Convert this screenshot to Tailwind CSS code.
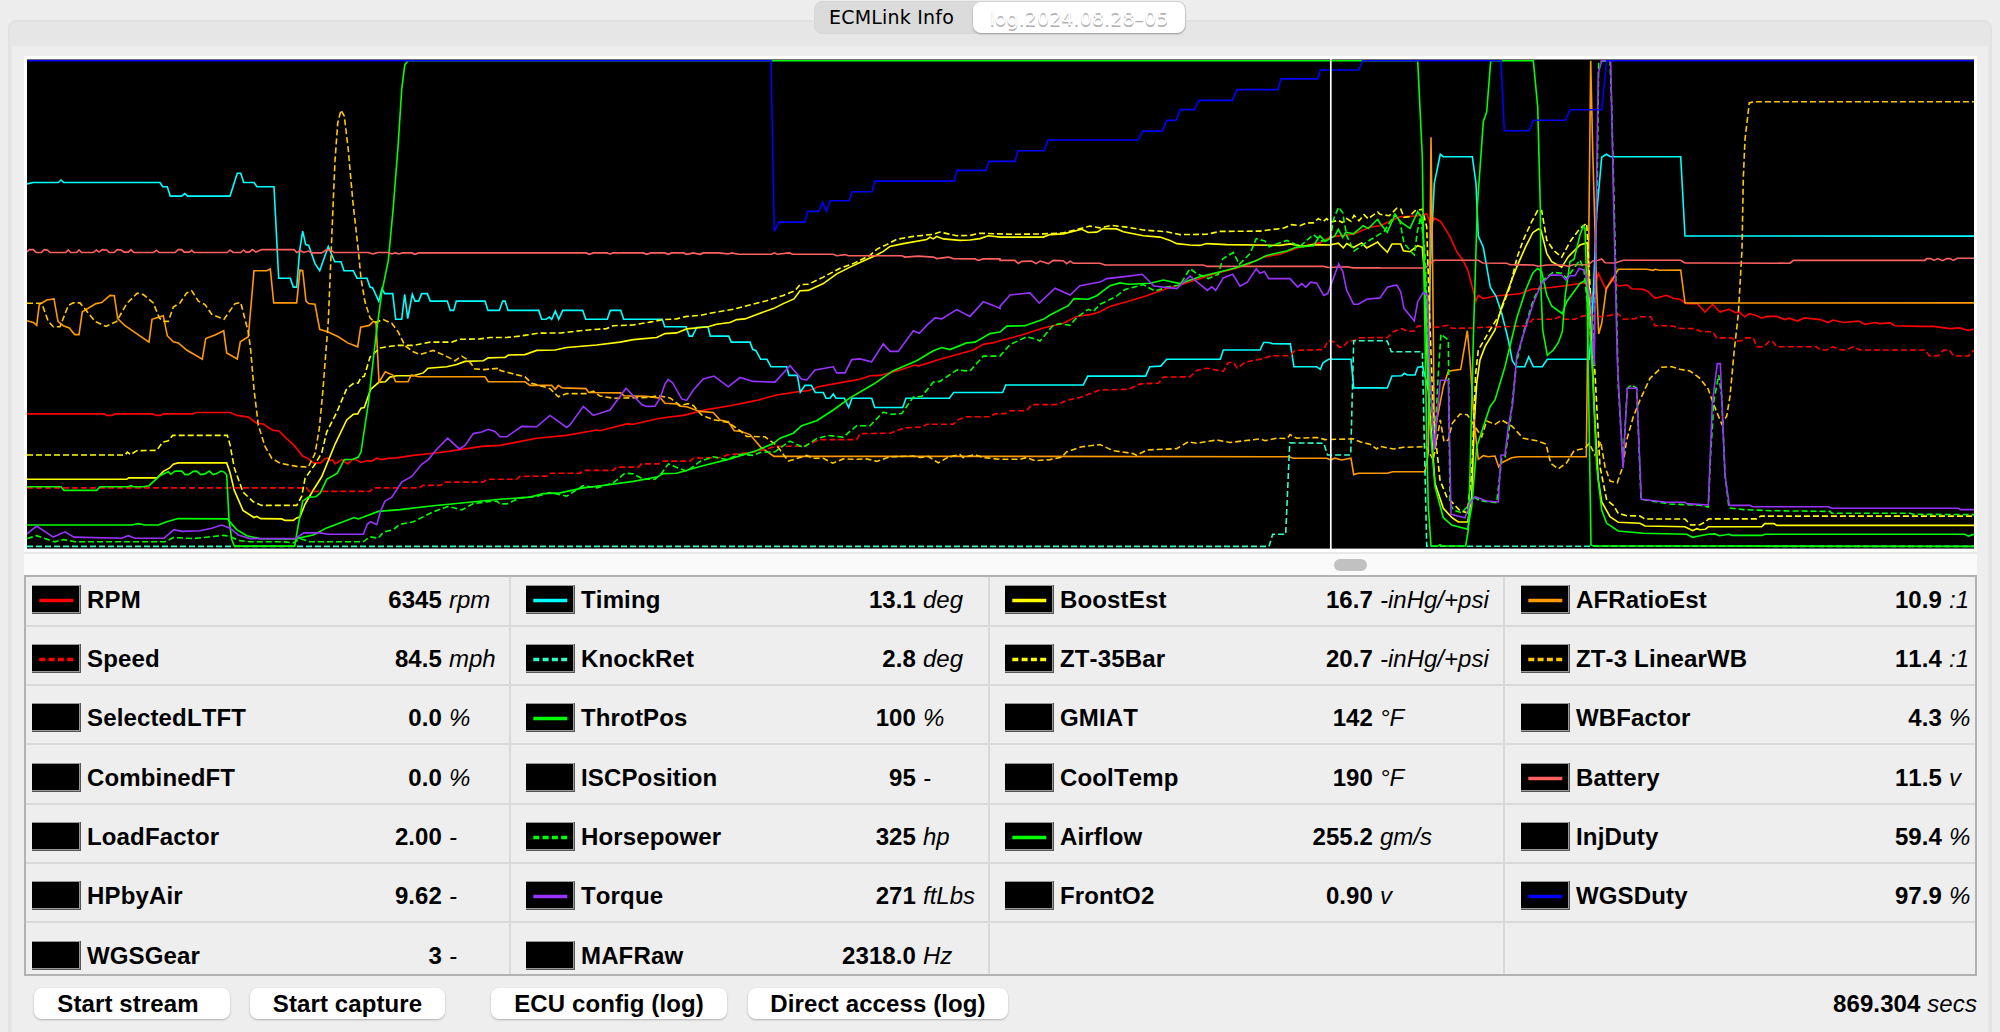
<!DOCTYPE html>
<html lang="en">
<head>
  <meta charset="UTF-8" />
  <meta name="viewport" content="width=device-width, initial-scale=1.0"/>
  <title>ECMLink</title>
  <script src="https://cdn.jsdelivr.net/npm/@tailwindcss/browser@4"></script>
</head>
<body class="bg-[#ededed] w-[2000px] h-[1032px] overflow-hidden text-black text-2xl font-['Liberation_Sans',Arial,sans-serif] [font-kerning:none]">

<div class="relative h-full pt-5 px-2">

  <!-- tabs sit on the top edge of the panel -->
  <div class="absolute top-px left-[814px] w-[372px] h-[33px] flex rounded-lg bg-[#dbdbdb] border border-[#d6d6d6] text-[19px] font-['DejaVu_Sans',sans-serif]">
    <button class="w-[158px] pl-[14px] text-left leading-[31px] tracking-[0.2px] whitespace-nowrap">ECMLink Info</button>
    <button class="flex-1 rounded-lg bg-white shadow-[0_1px_2px_#9a9a9a] text-white leading-[32px] tracking-[0.1px] [text-shadow:0_1.5px_0_#b4b4b4] whitespace-nowrap">log.2024.08.28–05</button>
  </div>

  <main class="h-[1040px] rounded-t-lg border-2 border-[#e1e1e1] bg-[#e6e6e6] pt-6 px-0.5">
    <div class="h-full bg-[#eeeeee] pt-2.5 pl-3 pr-[11px] flex flex-col">

      <div class="bg-white p-[3px] h-[496px]">
        <svg id="chart" class="block w-[1947px] h-[490px] bg-black" viewBox="27 59 1947 490" fill="none"></svg>
      </div>

      <div class="h-[23px] bg-[#fafafa] border-t-2 border-[#e8e8e8] flex items-center">
        <div class="ml-[1310px] w-[33px] h-3 rounded-full bg-[#c1c1c1]"></div>
      </div>

      <div id="values" class="h-[401px] border-2 border-[#b2b2b2] flex"></div>

      <footer class="flex items-start pt-3 pl-2.5 font-bold whitespace-nowrap">
        <button class="w-[196px] h-[31px] pr-2 rounded-lg bg-white shadow-[0_1px_2px_#b0b0b0] leading-7 tracking-[0.1px]">Start stream</button>
        <button class="w-[195px] h-[31px] ml-5 rounded-lg bg-white shadow-[0_1px_2px_#b0b0b0] leading-7 tracking-[0.1px]">Start capture</button>
        <button class="w-[236px] h-[31px] ml-[46px] rounded-lg bg-white shadow-[0_1px_2px_#b0b0b0] leading-7 tracking-[0.1px]">ECU config (log)</button>
        <button class="w-[260px] h-[31px] ml-[21px] rounded-lg bg-white shadow-[0_1px_2px_#b0b0b0] leading-7 tracking-[0.1px]">Direct access (log)</button>
        <div class="ml-auto leading-8 tracking-[0.1px]">869.304 <span class="font-normal italic">secs</span></div>
      </footer>
    </div>
  </main>
</div>

<script>
  // name, value, unit, line colour, dashed
  const columns = [
    { box: 'w-[485px] border-r-2 border-[#d9d9d9]', pad: 'pl-1.5', unit: 'w-[60px]', rows: [
      ['RPM', '6345', 'rpm', '#ff0000'],
      ['Speed', '84.5', 'mph', '#ff0000', 1],
      ['SelectedLTFT', '0.0', '%'],
      ['CombinedFT', '0.0', '%'],
      ['LoadFactor', '2.00', '-'],
      ['HPbyAir', '9.62', '-'],
      ['WGSGear', '3', '-'],
    ]},
    { box: 'w-[479px] border-r-2 border-[#d9d9d9]', pad: 'pl-[15px]', unit: 'w-[65px]', rows: [
      ['Timing', '13.1', 'deg', '#00ffff'],
      ['KnockRet', '2.8', 'deg', '#32ffc8', 1],
      ['ThrotPos', '100', '%', '#00ff00'],
      ['ISCPosition', '95', '-'],
      ['Horsepower', '325', 'hp', '#00ff00', 1],
      ['Torque', '271', 'ftLbs', '#9933ff'],
      ['MAFRaw', '2318.0', 'Hz'],
    ]},
    { box: 'w-[515px] border-r-2 border-[#d9d9d9]', pad: 'pl-[15px]', unit: 'w-[123px]', rows: [
      ['BoostEst', '16.7', '-inHg/+psi', '#ffff00'],
      ['ZT-35Bar', '20.7', '-inHg/+psi', '#ffff00', 1],
      ['GMIAT', '142', '°F'],
      ['CoolTemp', '190', '°F'],
      ['Airflow', '255.2', 'gm/s', '#00ff00'],
      ['FrontO2', '0.90', 'v'],
      null,
    ]},
    { box: 'w-[470px]', pad: 'pl-4', unit: 'w-[26px]', rows: [
      ['AFRatioEst', '10.9', ':1', '#ff9900'],
      ['ZT-3 LinearWB', '11.4', ':1', '#ffc800', 1],
      ['WBFactor', '4.3', '%'],
      ['Battery', '11.5', 'v', '#ff6060'],
      ['InjDuty', '59.4', '%'],
      ['WGSDuty', '97.9', '%', '#0000ff'],
      null,
    ]},
  ];

  document.getElementById('values').innerHTML = columns.map(c => `
    <div class="${c.box} overflow-hidden">
      ${c.rows.map(r => `
        <div class="${c.pad} flex items-start h-[59.35px] pt-[17.6px] first:h-[49.5px] first:pt-[7.6px] border-b-2 last:border-b-0 border-[#d9d9d9] leading-[29px] whitespace-nowrap">
          ${r ? `
          <svg class="shrink-0 w-[49px] h-[29px]" viewBox="0 0 49 29">
            <rect width="49" height="29" fill="#555"/>
            <rect width="48" height="28" fill="#999"/>
            <rect y="1" width="47" height="26" fill="#000"/>
            ${r[3] ? `<path d="M7.3 15.5H41.3" stroke="${r[3]}" stroke-width="3.4" ${r[4] ? 'stroke-dasharray="6 3.3"' : ''}/>` : ''}
          </svg>
          <span class="ml-1.5 font-bold tracking-[0.15px]">${r[0]}</span>
          <span class="ml-auto font-bold tracking-[0.1px]">${r[1]}</span>
          <span class="${c.unit} ml-[7px] italic">${r[2]}</span>` : ''}
        </div>`).join('')}
    </div>`).join('');

  // sample points are kept in blocks, each with its own origin and scale
  const blocks = {
    A: [0, 0, 2.8],
    B: [500, 0, 2.8],
    C: [1000, 0, 2.8],
    D: [1380, 40, 3],
    E: [1660, 0, 2.8],
  };

  const series = [
    { name: 'RPM', color: '#ff0000',
      A: '81,1159 312,1159 320,1163 336,1163 344,1159 458,1159 468,1163 482,1163 490,1159 578,1159 588,1155 690,1155 712,1163 745,1168 770,1185 790,1187 805,1197 820,1205 836,1206 860,1228 885,1250 908,1277 925,1284 940,1296 962,1296 975,1284 983,1282 990,1290 998,1288 1006,1299 1025,1287 1043,1299 1060,1284 1083,1295 1100,1290 1115,1291 1130,1283 1145,1287 1165,1283 1190,1282 1240,1275 1300,1269 1350,1263 1400,1256 1445,1250 1500,1247',
      B: '50,1238 110,1227 200,1219 290,1204 300,1206 380,1187 400,1188 480,1171 550,1163 620,1147 690,1136 770,1121 830,1106 900,1096 925,1094 955,1083 1030,1070 1080,1062 1110,1052 1140,1051 1200,1036 1245,1022 1255,1025 1320,1006 1420,980 1450,964 1478,960 1500,954',
      C: '70,937 130,918 190,905 230,886 270,881 300,873 330,858 380,845 440,828 500,808 540,798 580,786 640,768 700,753 740,742 790,720 840,712 900,692 960,680 990,664 1060,656 1110,636 1140,632',
      D: '20,548 60,530 110,528 140,521 153,556 163,534 182,545 210,590 230,635 250,662 265,695 288,783 295,766 310,776 345,768 420,761 455,748 520,742 550,738 615,728 635,770 645,740 655,700 679,750 695,715 715,738 742,735 755,746 790,748 805,755 825,775 860,766 880,775 900,778 915,788',
      E: '80,850 112,850 135,874 158,852 180,874 208,866 225,875 238,874 254,887 268,878 290,884 305,891 320,886 350,886 374,895 388,891 412,899 433,890 480,895 505,903 518,896 550,903 595,899 615,908 645,903 660,906 690,904 705,912 780,914 820,914 870,920 900,918 925,925 942,922' },
    { name: 'Timing', color: '#00ffff',
      A: '81,515 100,511 175,511 183,504 191,511 480,511 488,523 502,523 511,549 545,549 554,542 563,549 690,549 712,485 722,485 731,511 762,511 771,523 822,523 836,779 871,779 880,804 890,804 899,700 908,647 917,685 926,687 945,738 959,758 985,690 1004,733 1023,733 1032,758 1060,758 1071,779 1101,779 1110,804 1118,806 1136,843 1146,808 1154,822 1178,822 1187,894 1205,894 1214,824 1223,892 1237,824 1245,843 1256,843 1265,822 1282,822 1291,843 1342,843 1351,869 1361,869 1369,843 1455,843 1464,869 1498,869',
      B: '8,843 15,843 24,869 116,869 125,894 138,894 148,888 155,894 166,871 176,894 188,869 248,869 257,894 322,894 331,869 362,869 371,894 487,894 494,915 558,915 568,941 577,941 590,917 624,915 631,941 686,941 694,958 750,958 758,978 768,982 782,1006 801,1006 813,1027 860,1027 867,1051 892,1051 901,1098 915,1079 934,1079 946,1099 970,1099 978,1115 990,1115 1000,1103 1008,1115 1033,1115 1046,1141 1056,1115 1115,1115 1124,1141 1208,1141 1218,1115 1348,1115 1361,1099 1500,1099',
      C: '8,1099 17,1078 250,1078 263,1053 437,1053 449,1027 482,1025 500,1006 661,1006 670,980 780,980 791,959 806,959 817,962 871,963 882,1027 950,1027 961,1034 969,1016 986,1006 1053,1006 1061,1086 1140,1086',
      D: '22,1044 36,1008 65,1007 73,1000 82,1005 105,1005 113,982 128,980 145,1050 150,700 163,430 181,343 190,350 277,350 288,430 295,588 310,622 331,742 348,768 365,820 385,900 397,962 409,980 434,980 446,950 460,980 487,980 502,958 628,958 638,800 650,520 665,352 679,343 692,350 902,350 915,588 960,588',
      E: '942,661' },
    { name: 'BoostEst', color: '#ffff00',
      A: '81,1342 380,1342 386,1338 472,1338 490,1320 508,1311 520,1300 535,1296 680,1296 690,1323 703,1373 729,1429 762,1449 770,1446 782,1452 845,1453 855,1457 880,1457 890,1450 900,1447 915,1412 940,1372 965,1335 1005,1244 1040,1176 1060,1160 1073,1159 1083,1143 1093,1141 1112,1090 1137,1070 1156,1069 1170,1056 1190,1052 1240,1052 1270,1044 1284,1031 1340,1027 1370,1021 1395,1012 1450,1010 1465,1002 1500,1001',
      B: '15,1001 25,994 75,993 110,981 165,980 200,973 290,966 360,958 400,951 470,945 495,934 530,932 560,921 625,915 650,908 690,903 710,895 735,893 780,877 820,864 850,850 882,837 900,814 925,813 970,794 1010,767 1050,748 1090,731 1130,714 1150,704 1170,690 1210,682 1280,671 1290,664 1300,669 1310,662 1330,669 1380,673 1410,672 1440,668 1465,660 1500,664',
      C: '50,664 130,664 150,657 190,655 245,642 265,651 290,650 310,640 350,641 370,649 430,660 480,664 510,673 530,682 570,686 600,687 620,682 680,685 840,687 870,683 910,690 940,685 990,686 1015,681 1030,694 1040,682 1060,693 1085,680 1100,694 1133,678 1140,686',
      D: '22,637 36,612 62,612 70,632 90,635 113,617 127,622 133,700 145,1050 165,1330 190,1405 215,1432 235,1446 263,1446 275,1370 283,1150 290,1030 300,960 315,920 345,870 365,800 395,720 415,670 437,620 458,578 475,567 483,570 500,640 515,665 545,682 565,650 600,615 622,608 630,800 645,1150 655,1320 665,1385 690,1430 715,1447 780,1450 795,1458 915,1460 938,1472 950,1466 960,1469',
      E: '136,1482 145,1475 305,1475 314,1466 342,1466 350,1471 942,1471' },
    { name: 'AFRatioEst', color: '#ff9900',
      A: '81,898 100,903 110,911 118,853 140,840 162,837 174,900 190,912 208,918 224,937 237,937 247,873 288,850 305,847 330,827 343,828 353,892 375,912 447,958 456,894 490,884 502,940 520,957 535,960 560,980 607,1006 617,948 645,938 671,926 680,988 712,1005 721,957 745,943 762,758 800,758 811,753 821,848 890,848 900,756 908,758 918,843 926,850 945,852 959,922 985,930 1015,943 1043,960 1073,971 1082,916 1108,911 1120,900 1128,902 1137,1070 1156,1041 1178,1050 1187,1069 1224,1069 1234,1050 1255,1055 1455,1055 1465,1069 1500,1069',
      B: '75,1069 90,1079 155,1079 166,1090 175,1079 187,1086 258,1088 266,1099 362,1100 372,1108 440,1110 482,1115 495,1129 530,1131 540,1137 560,1139 600,1152 640,1155 660,1176 685,1181 703,1206 720,1207 750,1217 782,1252 822,1278 1500,1278',
      C: '868,1279 880,1283 980,1283 992,1288 1005,1283 1025,1288 1053,1283 1061,1329 1075,1325 1140,1325',
      D: '22,1300 38,1295 135,1295 145,1240 153,292 158,700 163,1180 190,1040 205,994 242,988 262,872 270,960 283,1150 295,1258 310,1247 325,1250 345,1248 356,1280 365,1268 395,1253 415,1250 619,1250 622,1000 632,62 638,330 650,750 656,882 665,850 679,745 695,722 715,688 800,688 820,691 825,688 840,691 902,690 915,789 960,789',
      E: '942,848' },
    { name: 'Speed', color: '#ff0000', dashed: true,
      A: '81,1366 920,1366 928,1376 1110,1376 1120,1366 1258,1366 1268,1359 1322,1359 1335,1350 1450,1350 1460,1342 1500,1342',
      B: '50,1342 60,1334 140,1333 150,1325 240,1325 250,1317 340,1317 350,1308 415,1308 425,1299 475,1299 490,1291 570,1291 580,1283 665,1281 680,1274 760,1266 830,1250 915,1249 935,1240 960,1231 1070,1231 1080,1214 1170,1213 1215,1198 1270,1195 1280,1188 1360,1188 1375,1175 1400,1167 1470,1167 1485,1159 1500,1158',
      C: '15,1158 30,1150 80,1150 95,1133 170,1133 200,1121 240,1113 300,1092 385,1090 420,1075 475,1073 490,1056 570,1055 590,1037 620,1031 670,1040 685,1015 700,1015 712,1031 735,1014 790,1004 815,996 870,996 885,981 970,979 985,954 1002,957 1018,972 1030,972 1043,956 1065,953 1075,946 1140,945',
      D: '22,893 40,875 65,866 85,875 105,872 113,858 170,862 205,856 215,865 277,864 310,862 440,858 458,838 520,838 540,830 555,838 585,838 600,830 625,825 665,830 715,822 730,838 765,836 775,830 812,830 825,857 880,858 895,865 945,866 960,874',
      E: '158,929 170,946 215,946 230,955 245,954 255,946 280,946 290,971 312,971 328,955 340,958 350,971 470,971 482,980 500,980 518,971 545,980 560,979 580,971 600,980 795,980 808,996 835,996 850,981 868,980 880,996 925,997 942,980' },
    { name: 'KnockRet', color: '#32ffc8', dashed: true,
      A: '81,1530',
      C: '807,1530 818,1496 857,1496 869,1240 971,1241 983,1274 1052,1274 1061,954 1140,954',
      D: '22,903 34,935 127,935 140,1519 960,1519',
      E: '942,1530' },
    { name: 'ZT-35Bar', color: '#ffff00', dashed: true,
      A: '81,1274 375,1274 382,1266 392,1273 410,1262 470,1261 488,1238 505,1234 518,1219 682,1219 690,1245 703,1310 729,1378 760,1405 785,1415 890,1415 905,1390 915,1340 945,1300 965,1268 980,1210 1010,1155 1040,1088 1060,1074 1075,1072 1083,1056 1093,1054 1110,1000 1140,974 1190,967 1240,967 1290,958 1355,958 1380,950 1440,949 1470,945 1500,945',
      B: '20,945 60,941 115,933 185,932 240,926 320,920 340,912 400,910 450,902 490,895 530,893 560,886 600,883 630,877 700,866 740,856 800,842 850,827 885,814 900,797 925,796 970,776 1020,751 1060,738 1110,715 1130,698 1160,685 1190,670 1240,662 1300,656 1320,650 1370,660 1410,659 1440,653 1500,655',
      C: '40,656 130,655 190,652 225,644 270,633 300,638 335,631 380,636 430,644 500,649 540,657 620,656 660,648 780,647 850,639 875,629 900,632 920,624 940,624 955,612 970,620 980,612 990,622 1015,617 1027,623 1040,612 1053,620 1062,603 1077,618 1092,601 1105,613 1115,605 1133,594 1140,600',
      D: '28,527 50,505 62,507 72,532 88,530 105,512 127,508 140,560 148,800 160,1130 180,1320 200,1370 240,1412 262,1418 275,1300 287,1000 295,930 330,870 358,825 390,740 412,650 430,600 455,545 475,508 485,512 500,600 520,630 545,652 570,605 600,565 620,550 628,700 645,1000 660,1280 680,1380 700,1396 715,1420 740,1427 780,1428 795,1437 915,1437 932,1455 960,1454',
      E: '136,1461 146,1453 290,1453 302,1445 942,1445' },
    { name: 'ZT-3 LinearWB', color: '#ffc800', dashed: true,
      A: '81,849 125,849 145,900 160,915 180,915 205,855 220,848 240,848 255,865 285,900 318,914 350,900 380,850 412,821 430,825 460,848 478,890 490,900 505,900 520,860 540,848 560,820 575,814 595,843 615,853 635,880 672,894 705,850 722,847 745,930 752,980 762,1090 775,1190 795,1250 815,1283 840,1297 890,1306 925,1308 945,1270 958,1200 968,1100 985,900 998,600 1005,450 1013,345 1023,308 1033,325 1045,420 1058,560 1075,700 1083,780 1095,845 1110,890 1125,903 1150,895 1175,905 1195,930 1215,968 1240,985 1260,993 1300,981 1340,998 1365,1010 1385,997 1405,1008 1425,1033 1450,1035 1500,1031',
      B: '0,1037 40,1047 75,1055 95,1073 150,1088 175,1111 200,1102 260,1102 280,1095 300,1109 340,1115 440,1113 475,1108 510,1114 540,1135 565,1130 580,1135 605,1162 640,1175 685,1183 720,1206 740,1222 795,1223 830,1247 865,1291 920,1275 940,1283 970,1283 998,1297 1030,1285 1070,1286 1100,1285 1130,1292 1170,1279 1240,1277 1260,1281 1285,1278 1315,1296 1345,1280 1380,1273 1390,1281 1425,1273 1450,1281 1500,1286',
      C: '60,1286 80,1281 105,1290 150,1287 185,1280 200,1265 245,1251 300,1245 340,1262 400,1270 410,1275 440,1260 530,1256 565,1237 590,1241 650,1232 690,1239 780,1229 795,1234 830,1227 862,1228 870,1217 890,1227 950,1225 975,1231 1060,1229 1080,1237 1110,1244 1130,1257 1140,1250',
      D: '40,1227 70,1222 138,1220 160,1260 170,1200 181,1140 192,1205 205,1200 217,1150 240,1122 262,1124 285,1160 305,1190 320,1143 345,1153 365,1140 395,1158 430,1195 470,1202 498,1212 512,1270 535,1287 560,1268 582,1232 615,1225 628,1210 645,1245 662,1205 675,1280 690,1323 712,1328 728,1280 740,1200 760,1130 780,1080 810,1015 845,982 875,980 900,988 930,993 960,1015',
      E: '145,1090 160,1130 185,1187 200,1165 210,1110 223,980 235,880 246,700 250,500 255,390 268,288 280,285 942,285' },
    { name: 'ThrotPos', color: '#00ff00',
      A: '81,1363 183,1363 192,1373 290,1373 300,1363 385,1363 393,1360 400,1363 430,1363 447,1360 480,1332 495,1325 505,1321 512,1328 525,1319 545,1319 555,1329 565,1329 580,1320 590,1319 602,1329 615,1327 628,1319 640,1329 650,1326 663,1319 673,1322 680,1330 687,1455 695,1510 703,1529 884,1529 895,1470 908,1403 925,1392 947,1391 961,1380 980,1342 1012,1325 1033,1287 1060,1286 1075,1280 1083,1266 1105,1130 1128,940 1145,820 1165,730 1180,580 1195,400 1205,250 1214,183 1223,170',
      D: '113,62 127,350 132,700 140,1200 145,1400 153,1518 175,1518 180,1514 185,1518 257,1518 265,1470 270,1300 280,900 292,500 310,245 320,215 332,62 460,62 473,200 481,500 483,750 488,870 502,946 520,930 535,908 547,875 556,765 570,665 582,658 600,585 610,558 615,565 622,800 633,1515 640,1518 960,1518',
      E: '942,1530' },
    { name: 'Battery', color: '#ff6060',
      A: '81,705 88,699 100,699 108,707 124,707 133,699 142,700 150,707 197,707 205,700 212,707 230,707 237,700 245,707 280,707 289,700 297,706 307,699 320,700 328,707 342,707 352,699 364,700 372,706 385,706 393,699 401,707 460,707 470,701 478,707 525,707 535,699 545,699 552,706 568,706 575,701 582,707 682,707 690,700 700,707 722,707 731,700 738,706 748,706 757,699 768,706 785,699 882,699 890,707 900,702 912,707 925,703 935,708 965,708 980,699 993,700 1002,707 1105,707 1118,711 1135,707 1165,707 1175,711 1187,708 1197,711 1207,708 1235,708 1245,712 1256,708 1500,708',
      B: '258,708 268,712 280,708 320,708 330,711 340,708 430,708 440,712 452,708 495,708 505,712 515,708 550,708 560,712 580,708 600,712 610,708 655,708 685,711 695,708 715,712 815,712 823,708 832,712 868,708 878,712 1000,712 1010,716 1035,713 1045,716 1205,716 1215,720 1255,717 1300,720 1310,724 1345,720 1360,724 1425,725 1435,729 1450,725 1500,725',
      C: '0,729 45,729 55,738 65,732 95,731 108,738 120,731 145,738 160,729 190,730 200,738 210,731 220,737 300,737 315,742 610,742 622,746 970,746 985,749 1040,747 1060,750 1140,750',
      D: '0,684 135,684 150,672 163,661 295,661 308,669 380,670 390,674 460,675 475,679 500,675 550,675 565,679 580,674 625,674 640,662 655,661 665,657 675,668 705,669 730,661 902,661 915,669 960,669',
      E: '390,737 400,729 795,729 800,724 812,724 822,729 833,724 848,730 860,724 870,724 880,729 892,723 942,723' },
    { name: 'Horsepower', color: '#00ff00', dashed: true,
      A: '81,1508 110,1500 150,1513 165,1517 190,1511 225,1517 495,1517 520,1505 580,1508 670,1499 690,1502 715,1513 750,1517 850,1517 880,1520 900,1508 930,1517 1090,1517 1110,1503 1135,1507 1150,1490 1180,1483 1200,1468 1240,1461 1300,1433 1345,1418 1385,1428 1420,1410 1460,1405 1490,1403',
      B: '0,1411 20,1411 60,1394 110,1390 150,1379 200,1389 250,1360 290,1366 340,1352 375,1325 400,1327 430,1342 465,1342 485,1325 505,1299 540,1312 560,1320 600,1292 640,1279 680,1287 720,1272 760,1275 780,1267 825,1265 870,1235 910,1253 950,1228 985,1219 1030,1224 1070,1192 1110,1192 1150,1154 1175,1160 1205,1158 1240,1112 1265,1110 1300,1070 1320,1068 1370,1036 1410,1039 1450,997 1500,997',
      C: '30,965 80,943 110,950 120,955 160,910 180,906 210,911 230,889 265,866 280,872 300,852 345,832 375,811 430,797 465,815 500,804 540,798 570,752 590,766 625,780 655,768 668,725 700,707 718,740 750,710 769,668 795,675 808,691 860,673 900,690 940,657 965,675 990,670 1002,610 1016,580 1028,596 1040,660 1062,703 1100,678 1140,655',
      D: '12,575 45,522 60,545 72,610 103,645 112,575 122,530 135,640 148,1000 163,1230 175,1000 183,882 205,900 210,1390 220,1410 245,1418 262,1400 280,1370 300,1382 350,1388 365,1256 375,1252 390,1150 410,965 430,880 460,780 490,720 520,697 545,700 560,715 600,660 612,690 640,980 652,400 656,65 690,62 695,200 705,600 715,1040 729,1270 742,1045 755,1035 770,1045 783,1378 870,1392 960,1396',
      E: '145,1420 152,1270 162,1120 176,1050 185,1110 195,1330 207,1422 250,1427 330,1430 510,1432 515,1437 750,1437 760,1440 942,1441' },
    { name: 'Airflow', color: '#00ff00',
      A: '81,1470 395,1470 415,1466 435,1470 475,1470 500,1461 535,1452 682,1453 710,1483 740,1500 780,1508 885,1509 940,1498 980,1478 1020,1464 1062,1449 1075,1453 1135,1432 1200,1427 1300,1416 1400,1407 1500,1398',
      B: '90,1392 130,1382 180,1380 250,1366 320,1358 400,1348 470,1336 490,1326 530,1325 600,1306 690,1285 770,1261 820,1242 840,1227 880,1213 905,1192 950,1178 1000,1148 1050,1114 1120,1076 1180,1038 1250,1010 1300,982 1325,973 1350,979 1400,960 1425,958 1470,934 1500,930',
      C: '20,913 75,912 130,894 150,882 205,856 222,836 265,838 290,828 330,800 360,792 385,796 450,793 490,784 540,794 600,775 700,752 770,729 800,715 860,703 890,692 940,688 960,660 975,676 1005,660 1015,642 1028,665 1038,650 1060,655 1090,632 1105,640 1133,614 1140,625',
      D: '22,577 45,525 65,548 90,565 113,515 127,535 135,700 148,1130 165,1340 190,1433 215,1455 263,1468 275,1400 290,1220 330,1100 345,1080 375,980 410,835 437,750 458,700 473,685 485,695 500,765 515,798 547,821 560,785 600,730 622,718 635,950 650,1280 665,1410 680,1450 715,1473 790,1480 920,1483 938,1492 960,1487',
      E: '145,1496 165,1495 178,1500 208,1496 215,1499 305,1499 315,1496 915,1496 925,1501 942,1496' },
    { name: 'Torque', color: '#9933ff',
      A: '81,1495 110,1473 160,1504 195,1489 222,1504 365,1507 385,1500 405,1507 492,1507 522,1483 545,1488 600,1486 635,1479 665,1470 690,1479 715,1498 750,1508 885,1508 912,1492 960,1492 985,1496 1090,1496 1102,1468 1112,1461 1130,1469 1142,1430 1155,1403 1175,1393 1205,1350 1235,1334 1265,1300 1285,1287 1310,1258 1343,1227 1378,1257 1395,1247 1420,1214 1445,1210 1465,1202 1485,1208',
      B: '0,1223 20,1223 65,1194 110,1195 150,1163 200,1197 210,1190 250,1138 280,1163 330,1148 378,1087 425,1133 440,1138 465,1137 480,1115 495,1075 505,1062 518,1072 545,1117 560,1121 580,1092 610,1061 642,1053 685,1083 720,1057 760,1068 825,1070 870,1024 905,1062 920,1064 945,1036 1000,1027 1010,1044 1035,1044 1055,1007 1080,1005 1115,1013 1150,963 1170,984 1195,984 1240,926 1258,933 1280,911 1305,890 1325,893 1370,867 1410,886 1450,845 1480,855 1500,864',
      C: '0,858 30,826 50,824 90,820 118,849 165,807 210,826 240,800 300,790 320,780 380,774 427,768 462,801 530,808 570,773 600,796 622,813 635,803 647,813 670,778 698,768 720,801 742,790 769,753 780,765 793,760 806,780 870,780 893,804 905,794 917,804 932,790 950,793 971,827 983,822 1016,739 1028,760 1040,813 1061,852 1075,852 1100,838 1140,834',
      D: '22,742 50,735 62,755 72,805 103,843 113,785 130,757 142,765 150,1000 163,1230 181,1021 205,1021 213,1423 230,1427 255,1433 270,1390 285,1370 320,1383 355,1386 363,1246 375,1244 385,1160 398,1090 410,950 425,900 460,790 485,730 512,705 545,706 558,720 570,707 585,707 598,685 615,692 632,780 643,975 650,400 655,100 665,62 692,62 700,450 712,960 729,1285 742,1045 770,1045 784,1378 860,1387 915,1387',
      E: '80,1410 145,1414 157,1130 172,1018 181,1018 195,1330 208,1415 270,1415 278,1419 505,1419 515,1423 895,1423 902,1427 942,1427' },
    { name: 'WGSDuty', color: '#0000ff',
      A: '81,170',
      B: '813,170 823,648 837,622 915,622 923,592 956,592 968,566 979,592 991,562 1048,562 1056,537 1116,537 1124,507 1362,507 1371,477 1458,477 1467,452 1500,452',
      C: '45,452 54,422 132,422 144,392 414,392 428,367 487,367 500,337 528,337 541,307 583,307 597,281 697,281 711,251 834,251 843,221 953,221 961,196 1076,196 1088,170',
      D: '363,62 373,272 447,272 460,241 556,241 570,209 665,209 680,62',
      E: '942,170' },
  ];

  function toPoints(s) {
    const out = [];
    for (const key in blocks) {
      if (!s[key]) continue;
      const [ox, oy, sy] = blocks[key];
      for (const p of s[key].split(' ')) {
        const [x, y] = p.split(',').map(Number);
        out.push((ox + x / 3).toFixed(1) + ',' + (oy + y / sy).toFixed(1));
      }
    }
    return out.join(' ');
  }

  document.getElementById('chart').innerHTML = series.map(s =>
    `<polyline points="${toPoints(s)}" stroke="${s.color}" stroke-width="1.6" ${s.dashed ? 'stroke-dasharray="6 3"' : ''}/>`
  ).join('') +
    '<path d="M27 59.5H1974M27 548.6H1974" stroke="#707070" stroke-width="1"/>' +
    '<path d="M1330.8 59V549" stroke="#fff" stroke-width="1.7"/>';
</script>
</body>
</html>
